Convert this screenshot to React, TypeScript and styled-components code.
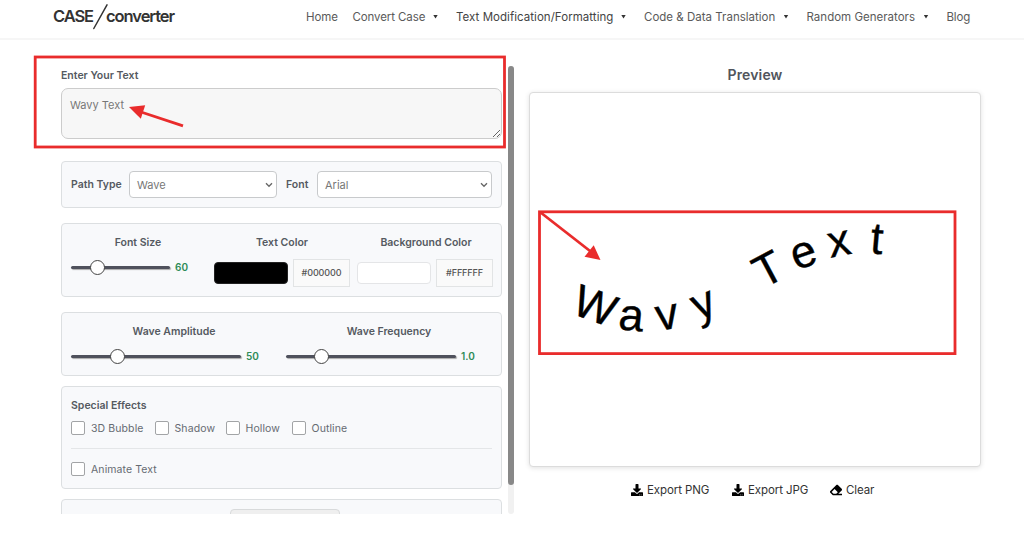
import { FC } from "react";
import styled, { createGlobalStyle } from "styled-components";
import { FaDownload, FaEraser } from "react-icons/fa";

const navItems = [
  { label: "Home", width: 46.5, spacing: -0.1 },
  { label: "Convert Case", width: 103.5, spacing: -0.1, menu: true },
  { label: "Text Modification/Formatting", width: 188, spacing: 0.04, menu: true, active: true },
  { label: "Code & Data Translation", width: 162.5, spacing: 0.01, menu: true },
  { label: "Random Generators", width: 140, spacing: 0.01, menu: true },
  { label: "Blog", width: 30, spacing: -0.15 },
];

const effects = [
  { label: "3D Bubble", width: 83.5 },
  { label: "Shadow", width: 71 },
  { label: "Hollow", width: 66 },
  { label: "Outline", width: 60 },
];

const letters = [
  { char: "W", x: 589.9, y: 320.8, angle: 20 },
  { char: "a", x: 629.9, y: 330.9, angle: 6 },
  { char: "v", x: 669.2, y: 329.6, angle: -9.5 },
  { char: "y", x: 708.4, y: 317.2, angle: -22 },
  { char: "T", x: 775.4, y: 283, angle: -28 },
  { char: "e", x: 807.8, y: 267, angle: -19 },
  { char: "x", x: 841.6, y: 256.2, angle: -11 },
  { char: "t", x: 875.8, y: 254.4, angle: 5 },
];

interface SelectFieldProps {
  value: string;
  width: number;
}

const SelectField: FC<SelectFieldProps> = ({ value, width }) => (
  <SelectBox $width={width}>
    <span>{value}</span>
    <svg width="8" height="6" viewBox="0 0 8 6">
      <path d="M1 1.2 L4 4.3 L7 1.2" fill="none" stroke="#666" strokeWidth="1.3" />
    </svg>
  </SelectBox>
);

interface SliderProps {
  value: string;
  width: number;
  position: number;
}

const Slider: FC<SliderProps> = ({ value, width, position }) => (
  <SliderRow>
    <Track $width={width}>
      <Thumb style={{ marginLeft: position }} />
    </Track>
    <SliderValue>{value}</SliderValue>
  </SliderRow>
);

const App: FC = () => {
  return (
    <Page>
      <GlobalStyle />
      <Header>
        <Logo>
          <LogoWord $width={40} $spacing={-1.1}>
            CASE
          </LogoWord>
          <svg width="15" height="26" viewBox="0 0 15 26">
            <path d="M0.8 24.5 L14 0.8" stroke="#333" strokeWidth="1.5" strokeLinecap="round" />
          </svg>
          <LogoWord $width={70} $spacing={-1.05} $shift={-2}>
            converter
          </LogoWord>
        </Logo>
        <Nav>
          {navItems.map((item) => (
            <NavItem key={item.label} $width={item.width} $spacing={item.spacing} $active={item.active}>
              {item.label}
              {item.menu && <Caret />}
            </NavItem>
          ))}
        </Nav>
      </Header>

      <Main>
        <Controls>
          <Label>Enter Your Text</Label>
          <TextArea defaultValue="Wavy Text" />

          <Card $height={47} $top={22}>
            <Row>
              <Label $width={58}>Path Type</Label>
              <SelectField value="Wave" width={148} />
              <Label $width={31} $indent={9}>
                Font
              </Label>
              <SelectField value="Arial" width={175} />
            </Row>
          </Card>

          <Card $height={74} $top={15}>
            <Columns $template="134px 136px 136px" $gap="9px">
              <Column>
                <Label>Font Size</Label>
                <Slider value="60" width={99} position={19} />
              </Column>
              <Column>
                <Label>Text Color</Label>
                <ColorRow>
                  <Swatch $color="#000000" $border="#222" />
                  <HexBox>#000000</HexBox>
                </ColorRow>
              </Column>
              <Column $shift={-2}>
                <Label>Background Color</Label>
                <ColorRow>
                  <Swatch $color="#ffffff" $border="#e4e5e7" />
                  <HexBox>#FFFFFF</HexBox>
                </ColorRow>
              </Column>
            </Columns>
          </Card>

          <Card $height={64} $top={15}>
            <Columns $template="206px 206px" $gap="9px">
              <Column>
                <Label>Wave Amplitude</Label>
                <Slider value="50" width={170} position={39} />
              </Column>
              <Column>
                <Label>Wave Frequency</Label>
                <Slider value="1.0" width={170} position={28} />
              </Column>
            </Columns>
          </Card>

          <Card $height={103} $top={10}>
            <EffectsTitle>Special Effects</EffectsTitle>
            <Row>
              {effects.map((effect) => (
                <Check key={effect.label} $width={effect.width}>
                  <Box />
                  {effect.label}
                </Check>
              ))}
            </Row>
            <Divider />
            <Check $width={100}>
              <Box />
              Animate Text
            </Check>
          </Card>

          <Card $height={60} $top={10}>
            <ResetButton />
          </Card>
        </Controls>
        <Scrollbar>
          <ScrollThumb />
        </Scrollbar>

        <Preview>
          <Title>Preview</Title>
          <Canvas>
            <svg width="450" height="373" viewBox="530 93.5 450 373">
              {letters.map(({ char, x, y, angle }) => (
                <Glyph key={char} textAnchor="middle" transform={`translate(${x} ${y}) rotate(${angle})`}>
                  {char}
                </Glyph>
              ))}
            </svg>
          </Canvas>
          <Actions>
            <Action $width={101}>
              <FaDownload size={12} color="#000" />
              Export PNG
            </Action>
            <Action $width={98}>
              <FaDownload size={12} color="#000" />
              Export JPG
            </Action>
            <Action $width={45}>
              <FaEraser size={12} color="#000" />
              Clear
            </Action>
          </Actions>
        </Preview>
      </Main>

      <Annotations width="1024" height="537" viewBox="0 0 1024 537">
        <rect x="35.2" y="57" width="469.3" height="90" />
        <rect x="539.5" y="211.8" width="415.5" height="141.8" />
        <path d="M183 125.8 L141 112" />
        <path d="M540 212 L590 251" />
        <polygon points="129,107 145.2,105.2 140.8,118.8" />
        <polygon points="600.5,260 593.7,245.3 584.5,256.8" />
      </Annotations>
    </Page>
  );
};

export default App;

const GlobalStyle = createGlobalStyle`
  * {
    box-sizing: border-box;
  }

  body {
    margin: 0;
    background: #fff;
    overflow: hidden;
    font-family: Inter, "Liberation Sans", sans-serif;
  }
`;

const Page = styled.div`
  position: relative;
  width: 1024px;
  height: 537px;
  overflow: hidden;
`;

const Header = styled.header`
  display: flex;
  height: 40px;
  padding-left: 53px;
  border-bottom: 2px solid #f6f6f6;
`;

const Logo = styled.div`
  display: flex;
  width: 253px;
  padding-top: 4px;
`;

const LogoWord = styled.span<{ $width: number; $spacing: number; $shift?: number }>`
  width: ${({ $width }) => $width}px;
  margin-left: ${({ $shift = 0 }) => $shift}px;
  font-size: 16.5px;
  font-weight: 600;
  line-height: 25px;
  letter-spacing: ${({ $spacing }) => $spacing}px;
  color: #333;
  white-space: nowrap;
`;

const Nav = styled.nav`
  display: flex;
  height: 33px;
`;

const NavItem = styled.a<{ $width: number; $spacing: number; $active?: boolean }>`
  display: flex;
  align-items: center;
  justify-content: space-between;
  width: ${({ $width }) => $width}px;
  padding-right: ${({ $width }) => ($width > 100 ? 18 : 0)}px;
  font-size: 11.5px;
  letter-spacing: ${({ $spacing }) => $spacing}px;
  color: ${({ $active }) => ($active ? "#444" : "#5a5a5a")};
  white-space: nowrap;
`;

const Caret = styled.i`
  width: 5px;
  height: 4px;
  background: #333;
  clip-path: polygon(0 0, 100% 0, 50% 100%);
`;

const Main = styled.main`
  display: flex;
  padding: 26px 0 0 61px;
`;

const Controls = styled.section`
  width: 441px;
  height: 448px;
  overflow: hidden;
`;

const Label = styled.label<{ $width?: number; $indent?: number }>`
  display: block;
  width: ${({ $width }) => ($width ? `${$width}px` : "auto")};
  margin-left: ${({ $indent = 0 }) => $indent}px;
  padding-top: 1px;
  font-size: 10.5px;
  font-weight: 600;
  line-height: 18px;
  color: #555a61;
  white-space: nowrap;
`;

const TextArea = styled.textarea`
  display: block;
  width: 441px;
  height: 51px;
  margin-top: 3px;
  padding: 9px 8px;
  border: 1.5px solid #ccc;
  border-radius: 7px;
  outline: none;
  background: #f7f7f7;
  font-family: inherit;
  font-size: 11px;
  line-height: 14px;
  color: #777;
`;

const Card = styled.div<{ $height: number; $top: number }>`
  height: ${({ $height }) => $height}px;
  margin-top: ${({ $top }) => $top}px;
  padding: 9px;
  border: 1px solid #dcdfe1;
  border-radius: 4px;
  background: #f8f9fb;
`;

const Row = styled.div`
  display: flex;
  align-items: center;
`;

const SelectBox = styled.div<{ $width: number }>`
  display: flex;
  align-items: center;
  justify-content: space-between;
  width: ${({ $width }) => $width}px;
  height: 27px;
  padding: 0 3px 0 7px;
  border: 1px solid #c8cacc;
  border-radius: 4px;
  background: #fff;
  font-size: 11px;
  color: #777;
`;

const Columns = styled.div<{ $template: string; $gap: string }>`
  display: grid;
  grid-template-columns: ${({ $template }) => $template};
  column-gap: ${({ $gap }) => $gap};
`;

const Column = styled.div<{ $shift?: number }>`
  margin-left: ${({ $shift = 0 }) => $shift}px;
  text-align: center;
`;

const SliderRow = styled.div`
  display: flex;
  align-items: center;
  gap: 5px;
  height: 18px;
  margin-top: 6px;
`;

const Track = styled.div<{ $width: number }>`
  display: flex;
  align-items: center;
  width: ${({ $width }) => $width}px;
  height: 3px;
  border-radius: 2px;
  background: #4f515c;
  box-shadow: 1px 1px 1px #aaa;
`;

const Thumb = styled.div`
  width: 15px;
  height: 15px;
  flex: none;
  border: 1px solid #444;
  border-radius: 50%;
  background: #fff;
`;

const SliderValue = styled.span`
  font-size: 10px;
  font-weight: 600;
  color: #2e8b57;
`;

const ColorRow = styled.div`
  display: flex;
  align-items: center;
  gap: 5px;
  margin-top: 7px;
`;

const Swatch = styled.div<{ $color: string; $border: string }>`
  width: 74px;
  height: 22px;
  flex: none;
  border: 1px solid ${({ $border }) => $border};
  border-radius: 4px;
  background: ${({ $color }) => $color};
`;

const HexBox = styled.div`
  width: 57px;
  height: 28px;
  flex: none;
  border: 1px solid #e2e4e5;
  background: #fafafa;
  font-size: 9px;
  font-weight: 500;
  line-height: 26px;
  letter-spacing: -0.1px;
  color: #555;
`;

const EffectsTitle = styled(Label)`
  margin-bottom: 6px;
`;

const Check = styled.label<{ $width: number }>`
  display: flex;
  align-items: center;
  gap: 6px;
  width: ${({ $width }) => $width}px;
  height: 14px;
  font-size: 10.5px;
  letter-spacing: 0.1px;
  color: #666b72;
  white-space: nowrap;
`;

const Box = styled.span`
  width: 14px;
  height: 14px;
  flex: none;
  border: 1px solid #a2a4a6;
  border-radius: 2px;
  background: #fff;
`;

const Divider = styled.hr`
  height: 1px;
  margin: 13px 0;
  border: 0;
  background: #e4e6e8;
`;

const ResetButton = styled.button`
  display: block;
  width: 110px;
  height: 28px;
  margin-left: 159px;
  border: 1px solid #d8dadb;
  border-radius: 4px;
  background: #efefef;
`;

const Scrollbar = styled.div`
  width: 6px;
  height: 448px;
  margin-left: 6px;
  background: #f1f1f1;
  border-radius: 3px;
`;

const ScrollThumb = styled.div`
  height: 419px;
  border-radius: 3px;
  background: #888;
`;

const Preview = styled.section`
  width: 452px;
  margin-left: 15px;
`;

const Title = styled.h2`
  margin: 0;
  font-size: 14px;
  font-weight: 600;
  line-height: 17px;
  letter-spacing: 0.15px;
  text-align: center;
  color: #51555c;
`;

const Canvas = styled.div`
  height: 375px;
  margin-top: 9px;
  border: 1px solid #dcdcdc;
  border-radius: 4px;
  background: #fff;
  box-shadow: 0 1px 5px rgba(0, 0, 0, 0.12);

  svg {
    display: block;
  }
`;

const Glyph = styled.text`
  font-family: "Liberation Sans", Arial, sans-serif;
  font-size: 45px;
  fill: #000;
  stroke: #000;
  stroke-width: 0.4px;
`;

const Actions = styled.div`
  display: flex;
  height: 45px;
  padding-left: 102px;
`;

const Action = styled.button<{ $width: number }>`
  display: flex;
  align-items: center;
  gap: 4px;
  width: ${({ $width }) => $width}px;
  padding: 1px 0 0;
  border: 0;
  background: none;
  font-family: inherit;
  font-size: 11.5px;
  letter-spacing: -0.1px;
  color: #333;
  white-space: nowrap;

  svg {
    flex: none;
  }
`;

const Annotations = styled.svg`
  position: absolute;
  inset: 0;
  pointer-events: none;

  rect,
  path {
    fill: none;
    stroke: #e92c2c;
    stroke-width: 2.8px;
  }

  polygon {
    fill: #e92c2c;
  }
`;
